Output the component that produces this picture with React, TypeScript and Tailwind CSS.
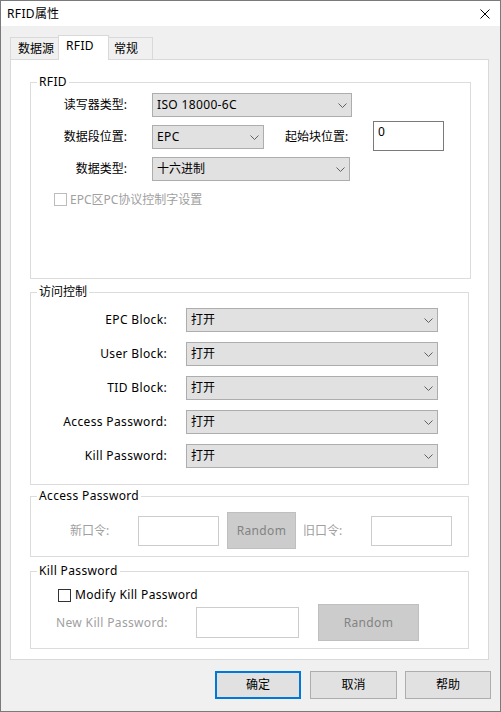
import React from "react";

const LAT = "tracking-[0.35px]";

function Chevron() {
  return (
    <svg width="9" height="5" viewBox="0 0 9 5" className="shrink-0">
      <path d="M0.5 0.5 L4.5 4.5 L8.5 0.5" fill="none" stroke="#606060" strokeWidth="1" />
    </svg>
  );
}

function Combo({ value, className, latin }: { value: string; className: string; latin?: boolean }) {
  return (
    <div
      className={`${className} h-[24px] bg-[#e1e1e1] border border-[#adadad] flex items-center justify-between pl-[4px] pr-[4px] shrink-0`}
    >
      <span className={`whitespace-nowrap ${latin ? LAT : ""}`}>{value}</span>
      <Chevron />
    </div>
  );
}

function Group({
  title,
  className,
  children,
  latin,
}: {
  title: string;
  className: string;
  children: React.ReactNode;
  latin?: boolean;
}) {
  return (
    <div className={`relative border border-[#dcdcdc] shrink-0 ${className}`}>
      <span
        className={`absolute left-[6px] top-[-9px] bg-white px-[2px] leading-[16px] whitespace-nowrap ${latin ? LAT : ""}`}
      >
        {title}
      </span>
      {children}
    </div>
  );
}

function Btn({ label, className }: { label: string; className: string }) {
  return (
    <div className={`h-[28px] bg-[#e1e1e1] flex items-center justify-center shrink-0 ${className}`}>
      {label}
    </div>
  );
}

export default function App() {
  const rows = ["EPC Block:", "User Block:", "TID Block:", "Access Password:", "Kill Password:"];
  return (
    <div className="w-[501px] h-[712px] border border-[#7a7a7a] bg-[#f0f0f0] flex flex-col text-[12px] leading-[16px] text-black font-['Noto_Sans','Noto_Sans_CJK_SC',sans-serif]">
      {/* Title bar */}
      <div className="h-[25px] bg-white flex items-center justify-between pl-[6px] pr-[10px] shrink-0">
        <span>
          <span className={LAT}>RFID</span>属性
        </span>
        <svg width="10" height="10" viewBox="0 0 10 10">
          <path d="M0.5 0.5 L9.5 9.5 M9.5 0.5 L0.5 9.5" stroke="#000" strokeWidth="1" fill="none" />
        </svg>
      </div>

      {/* Body */}
      <div className="flex-1 flex flex-col pl-[9px]">
        {/* Tabs */}
        <div className="mt-[9px] h-[24px] flex items-end shrink-0">
          <div className="w-[48px] h-[22px] border-l border-t border-[#d9d9d9] flex items-center pl-[7px]">
            数据源
          </div>
          <div className="relative z-10 w-[51px] h-[25px] mb-[-1px] bg-white border-l border-t border-r border-[#d9d9d9] flex items-start pt-[2px] pl-[7px]">
            <span className={LAT}>RFID</span>
          </div>
          <div className="w-[44px] h-[22px] border-t border-r border-[#d9d9d9] flex items-center pl-[5px]">
            常规
          </div>
        </div>

        {/* Panel */}
        <div className="w-[479px] h-[601px] bg-white border border-[#d9d9d9] pl-[19px] pt-[22px] flex flex-col shrink-0">
          {/* RFID group */}
          <Group title="RFID" latin className="w-[441px] h-[197px] pt-[10px] flex flex-col">
            <div className="h-[24px] flex items-center">
              <span className="w-[96px] text-right">读写器类型:</span>
              <Combo value="ISO 18000-6C" latin className="ml-[25px] w-[200px]" />
            </div>
            <div className="h-[24px] mt-[8px] flex items-center">
              <span className="w-[96px] text-right">数据段位置:</span>
              <Combo value="EPC" latin className="ml-[25px] w-[112px]" />
              <span className="ml-[21px] w-[88px] whitespace-nowrap">起始块位置:</span>
              <div className="w-[71px] h-[30px] mb-[2px] border border-[#7a7a7a] bg-white pl-[4px] pt-[2px] shrink-0">
                0
              </div>
            </div>
            <div className="h-[24px] mt-[8px] flex items-center">
              <span className="w-[96px] text-right">数据类型:</span>
              <Combo value="十六进制" className="ml-[25px] w-[198px]" />
            </div>
            <div className="h-[13px] mt-[12px] flex items-center">
              <div className="ml-[23px] w-[13px] h-[13px] border border-[#bcbcbc] bg-white shrink-0" />
              <span className="ml-[3px] text-[#a0a0a0] whitespace-nowrap">EPC区PC协议控制字设置</span>
            </div>
          </Group>

          {/* 访问控制 */}
          <Group title="访问控制" className="mt-[13px] w-[439px] h-[193px] pt-[15px] flex flex-col gap-[10px]">
            {rows.map((r) => (
              <div key={r} className="h-[24px] flex items-center">
                <span className={`w-[136px] text-right whitespace-nowrap ${LAT}`}>{r}</span>
                <Combo value="打开" className="ml-[19px] w-[252px]" />
              </div>
            ))}
          </Group>

          {/* Access Password */}
          <Group title="Access Password" latin className="mt-[11px] w-[439px] h-[61px] pt-[15px]">
            <div className="h-[37px] flex items-center">
              <span className="ml-[39px] w-[68px] text-[#a0a0a0]">新口令:</span>
              <div className="w-[81px] h-[30px] border border-[#cccccc] bg-white shrink-0" />
              <div
                className={`ml-[8px] w-[69px] h-[37px] bg-[#cccccc] border border-[#bfbfbf] text-[#838383] flex items-center justify-center shrink-0 ${LAT}`}
              >
                Random
              </div>
              <span className="ml-[7px] w-[68px] text-[#a0a0a0]">旧口令:</span>
              <div className="w-[81px] h-[30px] border border-[#cccccc] bg-white shrink-0" />
            </div>
          </Group>

          {/* Kill Password */}
          <Group title="Kill Password" latin className="mt-[14px] w-[439px] h-[78px] pt-[16px] flex flex-col">
            <div className="h-[14px] flex items-center">
              <div className="ml-[27px] w-[13px] h-[13px] border border-[#333333] bg-white shrink-0" />
              <span className={`ml-[4px] whitespace-nowrap ${LAT}`}>Modify Kill Password</span>
            </div>
            <div className="mt-[2px] h-[37px] flex items-center">
              <span className={`ml-[25px] w-[140px] text-[#a0a0a0] whitespace-nowrap ${LAT}`}>
                New Kill Password:
              </span>
              <div className="w-[103px] h-[31px] border border-[#cccccc] bg-white shrink-0" />
              <div
                className={`ml-[19px] w-[101px] h-[37px] bg-[#cccccc] border border-[#bfbfbf] text-[#838383] flex items-center justify-center shrink-0 ${LAT}`}
              >
                Random
              </div>
            </div>
          </Group>
        </div>

        {/* Buttons */}
        <div className="mt-[11px] flex justify-end pr-[9px]">
          <Btn label="确定" className="w-[86px] border-2 border-[#0078d7]" />
          <Btn label="取消" className="ml-[9px] w-[87px] border border-[#adadad]" />
          <Btn label="帮助" className="ml-[8px] w-[86px] border border-[#adadad]" />
        </div>
      </div>
    </div>
  );
}
